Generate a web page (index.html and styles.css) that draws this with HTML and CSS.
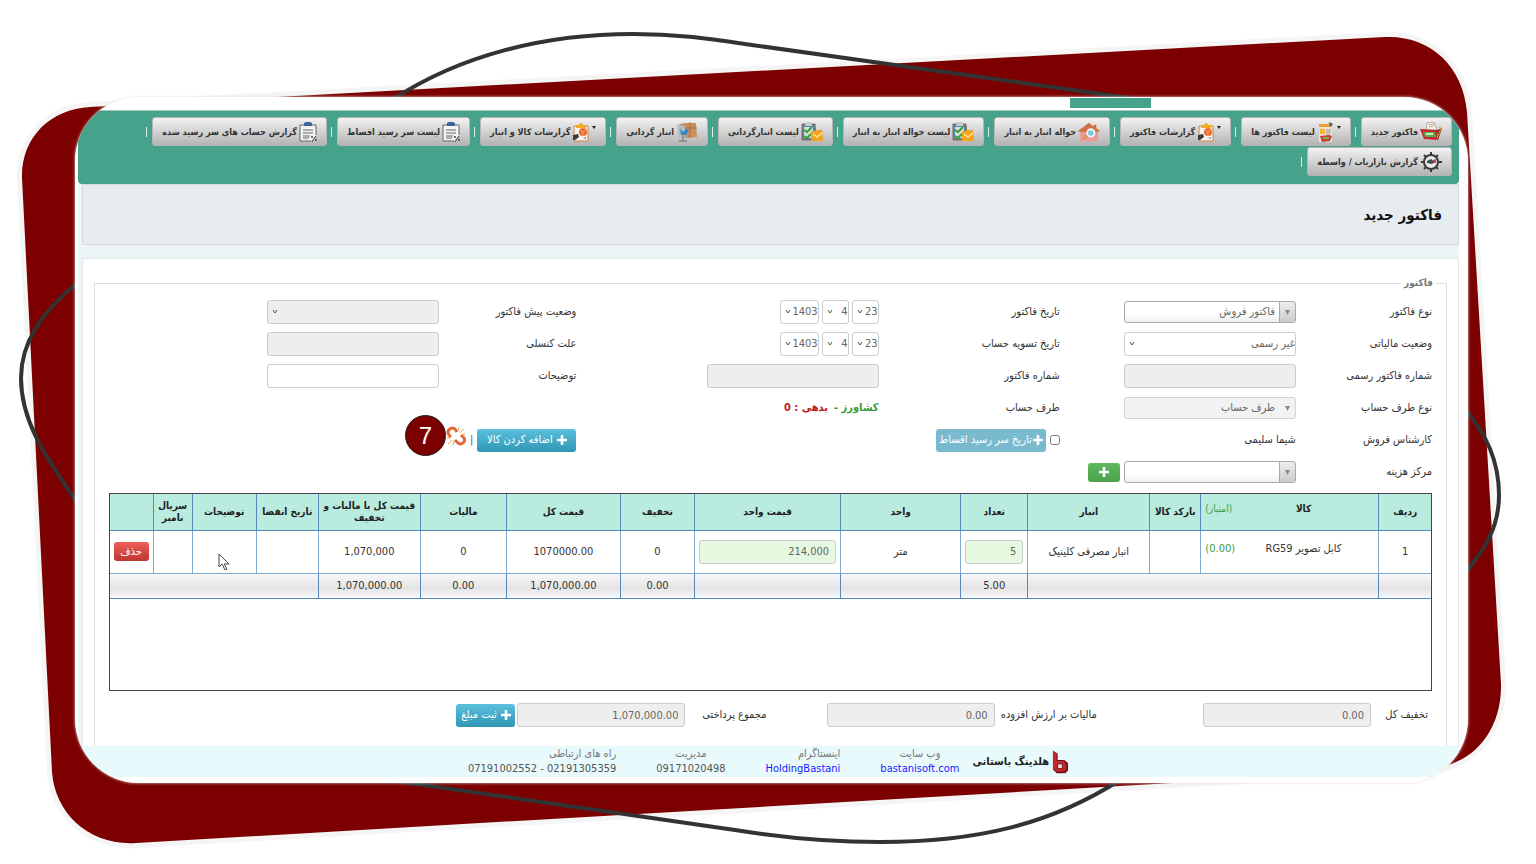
FILE: index.html
```html
<!DOCTYPE html>
<html lang="fa" dir="rtl">
<head>
<meta charset="utf-8">
<meta name="viewport" content="width=device-width, initial-scale=1">
<title>فاکتور جدید</title>
<link rel="stylesheet" href="styles.css">
</head>
<body>
<svg class="backdrop" viewBox="0 0 1536 864" preserveAspectRatio="none" aria-hidden="true">
  <path class="backdrop-shadow" d="M90 107 L1385 37 C1430 35 1463 66 1467 112 L1501 684 C1502 732 1472 765 1432 768 L136 843 C90 846 55 814 52 772 L22 178 C21 138 50 109 90 107Z"/>
  <path class="backdrop-red" d="M90 107 L1385 37 C1430 35 1463 66 1467 112 L1501 684 C1502 732 1472 765 1432 768 L136 843 C90 846 55 814 52 772 L22 178 C21 138 50 109 90 107Z"/>
  <g class="backdrop-line">
    <path d="M392 100 C460 55 545 34 633 34 C675 34 705 38 745 44 L1130 98"/>
    <path d="M80 281 C45 308 21 340 21 378 C21 425 50 462 80 507"/>
    <path d="M1462 406 C1487 433 1499 462 1499 495 C1499 528 1485 549 1462 577"/>
    <path d="M395 781 L735 830 C785 838 830 842 880 842 C975 842 1050 825 1120 780"/>
  </g>
</svg>

<svg class="symbols" aria-hidden="true">
  <symbol id="i-basket" viewBox="0 0 22 20">
    <path d="M7 1l7-1 3 8H6z" fill="#f5f3ee" stroke="#b5aaa0"/><path d="M9 3l5-1M9 5l5-1" stroke="#c9a58a"/>
    <path d="M0 7l17 1 1 10-14-1z" fill="#c8252c"/><path d="M17 8l5-2-4 12z" fill="#7c2a25"/>
    <path d="M3 10h12l1 5H5z" fill="#4fae4e"/><path d="M6 12h7" stroke="#d5efb5" stroke-width="2"/>
    <path d="M19 5l2 1-4 10" stroke="#e0a13c" fill="none"/>
  </symbol>
  <symbol id="i-list" viewBox="0 0 16 20">
    <path d="M1 2h13v18H1z" fill="#e6e1d9"/><path d="M1 2h13v3H1z" fill="#f0a02c"/><path d="M11 0l4 2-3 3" fill="#555"/>
    <path d="M2 7h5v5H2z" fill="#f5b53a"/><path d="M8 8h5M8 10h5M8 12h4" stroke="#999"/>
    <path d="M2 14l9-1 3 1-2 5-8 1z" fill="#c8402c"/><path d="M5 16h6" stroke="#69b75c" stroke-width="2"/>
  </symbol>
  <symbol id="i-report" viewBox="0 0 18 20">
    <path d="M2 4h14v15H2z" fill="#f7f1ea" stroke="#d08545" stroke-width="1"/><path d="M4 3h3a2 2 0 0 1 4 0h3v3H4z" fill="#f2ab27"/>
    <circle cx="11" cy="10" r="4" fill="#ee6a35"/><path d="M11 10L8 8M11 10l3-2M11 10v4" stroke="#f6a73c" stroke-width="1"/>
    <path d="M1 13l5-1 1 3-4 3H1z" fill="#3b3b3b"/><path d="M11 16l3-1v2z" fill="#5b8fd0"/>
  </symbol>
  <symbol id="i-house" viewBox="0 0 24 20">
    <path d="M2 9h20v11H2z" fill="#eb9a9a"/><path d="M12 0L0 9l2 1h20l2-1-4-3V2h-3v2z" fill="#cd7448"/>
    <circle cx="14" cy="11" r="4" fill="#7cc6dc" stroke="#f2f5f7" stroke-width="2"/><path d="M10 14l-5 4" stroke="#d99438" stroke-width="2"/>
  </symbol>
  <symbol id="i-check" viewBox="0 0 22 20">
    <path d="M1 2h13l1 16H1z" fill="#4f86b5" stroke="#94653c"/><path d="M5 0h6v4H4z" fill="#c9ccce"/>
    <path d="M3 5h9v11H3z" fill="#cfe2da"/><path d="M3 8l3 2 5-5M3 14l3 2 4-4" stroke="#3f9a2e" stroke-width="2" fill="none"/>
    <path d="M10 9h4l1-1h6l1 11H10z" fill="#f3a41f"/><path d="M12 11l4 3 5-4v2l-5 4-4-3z" fill="#ffe08a"/>
  </symbol>
  <symbol id="i-box" viewBox="0 0 20 20">
    <path d="M8 1l11 0 1 14-9 1-8-1V2z" fill="#c98f5e"/><path d="M8 6h12M13 0v16" stroke="#a66f42"/>
    <path d="M0 2l8 2v12H2z" fill="#b4bcc3"/><path d="M3 7l3 3 3-3 3 1-3 5-5 0z" fill="#2e86cf"/>
    <path d="M6 12v6M2 19h8" stroke="#8b9196" stroke-width="2"/>
  </symbol>
  <symbol id="i-clip" viewBox="0 0 18 20">
    <path d="M12 19H1V3h16v10" fill="#f3f3f3" stroke="#666"/>
    <path d="M5 1l2-1h4l2 1v3H5z" fill="#3b659c"/><path d="M4 8h10M4 11h10M4 14h7M4 16h6" stroke="#666"/>
    <path d="M17 14l-4 6" stroke="#444"/><circle cx="13" cy="15" r="1" fill="#444"/><circle cx="17" cy="18" r="1" fill="#444"/>
  </symbol>
  <symbol id="i-gear" viewBox="0 0 22 20">
    <circle cx="11" cy="10" r="7" fill="#e8e8e8" stroke="#3a3a3a" stroke-width="2"/>
    <path d="M11 0v3M11 17v3M1 10h3M18 10h4M4 3l2 2M16 15l2 2M18 3l-2 2M6 15l-2 2" stroke="#3a3a3a" stroke-width="2"/>
    <path d="M7 9l4-2 4 3-3 2-5-1z" fill="#4a4a4a"/><path d="M13 8l3-1v4h-2z" fill="#c44"/>
  </symbol>
  <symbol id="i-plus" viewBox="0 0 10 10"><path d="M5 1v8M1 5h8" stroke="#fff" stroke-width="2.6" stroke-linecap="round"/></symbol>
</svg>

<main class="card">
  <div class="tabstrip"><span class="tab"></span></div>
  <nav class="toolbar">
    <span class="item"><button class="tool"><svg class="icon"><use href="#i-basket"/></svg>فاکتور جدید</button></span>
    <span class="item"><button class="tool menu"><i class="caret"></i><svg class="icon narrow"><use href="#i-list"/></svg>لیست فاکتور ها</button></span>
    <span class="item"><button class="tool menu"><i class="caret"></i><svg class="icon narrow"><use href="#i-report"/></svg>گزارشات فاکتور</button></span>
    <span class="item"><button class="tool"><svg class="icon"><use href="#i-house"/></svg>حواله انبار به انبار</button></span>
    <span class="item"><button class="tool"><svg class="icon"><use href="#i-check"/></svg>لیست حواله انبار به انبار</button></span>
    <span class="item"><button class="tool"><svg class="icon"><use href="#i-check"/></svg>لیست انبارگردانی</button></span>
    <span class="item"><button class="tool"><svg class="icon"><use href="#i-box"/></svg>انبار گردانی</button></span>
    <span class="item"><button class="tool menu"><i class="caret"></i><svg class="icon narrow"><use href="#i-report"/></svg>گزارشات کالا و انبار</button></span>
    <span class="item"><button class="tool"><svg class="icon narrow"><use href="#i-clip"/></svg>لیست سر رسید اقساط</button></span>
    <span class="item"><button class="tool"><svg class="icon narrow"><use href="#i-clip"/></svg>گزارش حساب های سر رسید شده</button></span>
    <span class="item"><button class="tool"><svg class="icon"><use href="#i-gear"/></svg>گزارش بازاریاب / واسطه</button></span>
  </nav>

  <div class="content">
    <header class="page-head"><h1>فاکتور جدید</h1></header>
    <section class="panel">
      <fieldset class="invoice">
        <legend>فاکتور</legend>
        <div class="form">
          <label for="type">نوع فاکتور</label>
          <div><select id="type" class="control chosen"><option>فاکتور فروش</option></select></div>
          <label for="d1">تاریخ فاکتور</label>
          <div class="dates">
            <select id="d1" class="control arrow day"><option>23</option></select>
            <select class="control arrow day" aria-label="ماه"><option>4</option></select>
            <select class="control arrow year" aria-label="سال"><option>1403</option></select>
          </div>
          <label for="pre">وضعیت پیش فاکتور</label>
          <div><select id="pre" class="control arrow" disabled><option></option></select></div>

          <label for="tax">وضعیت مالیاتی</label>
          <div><select id="tax" class="control arrow"><option>غیر رسمی</option></select></div>
          <label for="d2">تاریخ تسویه حساب</label>
          <div class="dates">
            <select id="d2" class="control arrow day"><option>23</option></select>
            <select class="control arrow day" aria-label="ماه"><option>4</option></select>
            <select class="control arrow year" aria-label="سال"><option>1403</option></select>
          </div>
          <label for="cancel">علت کنسلی</label>
          <div><input id="cancel" class="control" disabled></div>

          <label for="official">شماره فاکتور رسمی</label>
          <div><input id="official" class="control" disabled></div>
          <label for="number">شماره فاکتور</label>
          <div><input id="number" class="control" disabled></div>
          <label for="notes">توضیحات</label>
          <div><input id="notes" class="control"></div>

          <label for="ptype">نوع طرف حساب</label>
          <div><select id="ptype" class="control chosen" disabled><option>طرف حساب</option></select></div>
          <span>طرف حساب</span>
          <div class="party"><span class="name">کشاورز -</span><span class="debt">بدهی : 0</span></div>
          <div class="rest"></div>

          <span>کارشناس فروش</span>
          <span>شیما سلیمی</span>
          <div class="actions installment">
            <input type="checkbox" id="inst" aria-label="تاریخ سر رسید اقساط">
            <button class="btn info" disabled><svg class="plus"><use href="#i-plus"/></svg>تاریخ سر رسید اقساط</button>
          </div>
          <div class="actions rest">
            <button class="btn info add"><svg class="plus"><use href="#i-plus"/></svg>اضافه کردن کالا</button>
            <span class="bar">|</span>
            <svg class="unlink" viewBox="0 0 20 20" role="img" aria-label="قطع پیوند"><g fill="none"><path d="M5 11L3 9C0 5 5 0 9 3l2 3M9 14l3 3c4 3 8-2 6-5l-3-3" stroke="#e2683c" stroke-width="3"/><path d="M12 5l1-4M14 7l4-4M15 9l4-1M8 15l-1 4M6 14l-4 4M5 12H1" stroke="#eea04d" stroke-width="1"/></g></svg>
            <span class="step">7</span>
          </div>

          <label for="cost">مرکز هزینه</label>
          <div class="actions">
            <select id="cost" class="control chosen"><option></option></select>
            <button class="btn success" aria-label="افزودن"><svg class="plus"><use href="#i-plus"/></svg></button>
          </div>
        </div>

        <div class="grid-box">
          <table>
            <colgroup><col class="w52"><col class="w178"><col class="w51"><col class="w122"><col class="w67"><col class="w120"><col class="w146"><col class="w74"><col class="w114"><col class="w86"><col class="w102"><col class="w62"><col class="w64"><col class="w39"><col class="w43"></colgroup>
            <thead><tr><th>ردیف</th><th><div class="goods"><span>کالا</span><span class="score">(امتیاز)</span></div></th><th>بارکد کالا</th><th>انبار</th><th>تعداد</th><th>واحد</th><th>قیمت واحد</th><th>تخفیف</th><th>قیمت کل</th><th>مالیات</th><th>قیمت کل با مالیات و تخفیف</th><th>تاریخ انقضا</th><th>توضیحات</th><th>سریال نامبر</th><th></th></tr></thead>
            <tbody><tr><td>1</td><td><div class="goods"><span>کابل تصویر RG59</span><span class="score" dir="ltr">(0.00)</span></div></td><td></td><td>انبار مصرفی کلینیک</td><td class="edit"><input class="control" value="5" aria-label="تعداد"></td><td>متر</td><td class="edit"><input class="control" value="214,000" aria-label="قیمت واحد"></td><td>0</td><td>1070000.00</td><td>0</td><td>1,070,000</td><td></td>
              <td><svg class="cursor" viewBox="0 0 12 18" aria-hidden="true"><path d="M1 1v13l3-3 3 6 2-1-3-5h5z" fill="#fff" stroke="#444"/></svg></td><td></td><td class="edit"><button class="btn danger">حذف</button></td></tr></tbody>
            <tfoot><tr><td></td><td colspan="3"></td><td>5.00</td><td></td><td></td><td>0.00</td><td>1,070,000.00</td><td>0.00</td><td>1,070,000.00</td><td colspan="4"></td></tr></tfoot>
          </table>
        </div>

        <div class="totals">
          <label for="t1">تخفیف کل</label><div><input id="t1" class="control" value="0.00" readonly></div>
          <label for="t2">مالیات بر ارزش افزوده</label><div><input id="t2" class="control" value="0.00" readonly></div>
          <label for="t3">مجموع پرداختی</label>
          <div class="actions"><input id="t3" class="control" value="1,070,000.00" readonly><button class="btn info pay"><svg class="plus"><use href="#i-plus"/></svg>ثبت مبلغ</button></div>
        </div>
      </fieldset>
    </section>
  </div>

  <footer class="footer">
    <div class="brand">
      <svg viewBox="0 0 18 24" aria-hidden="true"><path d="M1 0l5 3v7h7l4 3v8l-3 3H5l-4-4z" fill="#721419"/><path d="M1 0l4 3v8h7l3 3v6l-3 2H5l-4-3z" fill="#c3282d"/><path d="M6 14h5v5H6z" fill="#f4dada" stroke="#721419"/></svg>
      <strong>هلدینگ باستانی</strong>
    </div>
    <div class="contact mid"><span>وب سایت</span><a href="#">bastanisoft.com</a></div>
    <div class="contact"><span>اینستاگرام</span><a href="#">HoldingBastani</a></div>
    <div class="contact mid"><span>مدیریت</span><b>09171020498</b></div>
    <div class="contact"><span>راه های ارتباطی</span><b dir="ltr">07191002552 - 02191305359</b></div>
  </footer>
</main>
</body>
</html>
```
FILE: styles.css
```css
* { box-sizing: border-box; }

body {
  margin: 0;
  min-height: 100vh;
  padding: 97px 68px 80px 75px;
  position: relative;
  background: #fff;
  color: #333;
  font: 11px/16px "DejaVu Sans Condensed", "DejaVu Sans", sans-serif;
}

button, input, select { font: inherit; color: inherit; margin: 0; }

.backdrop { position: absolute; inset: 0; width: 100%; height: 100%; }
.backdrop-shadow { fill: none; stroke: #f5f5f5; stroke-width: 10; }
.backdrop-red { fill: #7d0000; }
.backdrop-line { fill: none; stroke: #333; stroke-width: 4; }
.symbols { position: absolute; width: 0; height: 0; }

.card {
  position: relative;
  display: flex;
  flex-direction: column;
  padding: 0 9px 6px 3px;
  background: #fff;
  border-radius: 64px;
  overflow: hidden;
  box-shadow: 0 0 3px #ddd;
}

.tabstrip { height: 13px; padding: 1px 308px 0 0; }
.tab { display: block; width: 81px; height: 10px; background: #46a28b; }

.toolbar {
  display: flex;
  flex-wrap: wrap;
  align-content: flex-start;
  row-gap: 1px;
  min-height: 74px;
  padding: 6px 7px 6px 0;
  background: #46a28b;
  border-top: 1px solid #9fc9bd;
  border-radius: 0 0 4px 4px;
}
.item { display: flex; align-items: center; }
.item::after { content: ""; width: 1px; height: 10px; margin: 0 5px 0 4px; background: #d9f0e9; }
.tool {
  display: flex;
  align-items: center;
  gap: 2px;
  height: 29px;
  padding: 0 9px;
  border: 1px solid #b5b5b5;
  border-radius: 3px;
  background: linear-gradient(#f2f2f2, #b4b4b4);
  font-weight: bold;
  font-size: 9px;
  white-space: nowrap;
}
.icon { width: 22px; height: 20px; }
.icon.narrow { width: 18px; }
.caret { border: 2px solid transparent; border-top: 3px solid #222; border-bottom: 0; margin-bottom: 8px; }

.content { padding-left: 4px; background: #ecf4f7; }
.page-head {
  display: flex;
  align-items: center;
  height: 61px;
  padding: 0 16px;
  background: #e7ecf0;
  border: 1px solid #d5dade;
}
h1 { margin: 0; font-size: 15px; line-height: 20px; color: #111; }
.panel {
  margin-top: 13px;
  padding: 16px 11px 0;
  background: #fff;
  border: 1px solid #e4e8ea;
  border-bottom: 0;
  border-radius: 3px 3px 0 0;
}
.invoice {
  margin: 0;
  min-width: 0;
  padding: 5px 14px 19px;
  border: 1px solid #ddd;
  border-bottom: 0;
}
legend { padding: 0 3px; margin-right: -4px; font-weight: bold; color: #777; font-size: 10px; }

.form {
  display: grid;
  grid-template-columns: 136fr 236fr 181fr 302fr 137fr 330fr;
  grid-auto-rows: 32px;
  align-items: center;
}
.rest { grid-column: span 2; }
.control {
  display: block;
  width: 172px;
  height: 24px;
  padding: 0 6px;
  background-color: #fff;
  border: 1px solid #ccc;
  border-radius: 3px;
  color: #666;
  appearance: none;
}
.control:disabled, .control:read-only:not(select) { background-color: #eee; opacity: 1; }
.arrow {
  padding: 0;
  background: #fff url("data:image/svg+xml,%3Csvg xmlns='http://www.w3.org/2000/svg' width='6' height='6'%3E%3Cpath d='M1 1l2 3 2-3' fill='none' stroke='%23555'/%3E%3C/svg%3E") no-repeat 4px center;
}
.chosen {
  padding: 0 20px 0 6px;
  height: 22px;
  border-color: #aaa;
  background:
    url("data:image/svg+xml,%3Csvg xmlns='http://www.w3.org/2000/svg' width='5' height='5'%3E%3Cpath d='M0 0h5L2.500 5z' fill='%23888'/%3E%3C/svg%3E") no-repeat right 5px center,
    linear-gradient(#aaa, #aaa) no-repeat right 15px top / 1px 100%,
    linear-gradient(#eee, #ccc) no-repeat right / 15px 100%,
    linear-gradient(#fff 60%, #eee);
}
.chosen:disabled {
  border-color: #d5d5d5;
  background: #f2f2f2 url("data:image/svg+xml,%3Csvg xmlns='http://www.w3.org/2000/svg' width='5' height='5'%3E%3Cpath d='M0 0h5L2.500 5z' fill='%23888'/%3E%3C/svg%3E") no-repeat right 5px center;
}
.dates { display: flex; gap: 3px; }
.day { width: 27px; }
.year { width: 39px; }
.party { display: flex; gap: 6px; font-weight: bold; }
.name { color: #3b9b3b; }
.debt { color: #c01818; }

.actions { display: flex; align-items: center; gap: 4px; }
.installment { grid-column: span 2; }
.installment input { width: 10px; height: 10px; }
.btn {
  display: flex;
  align-items: center;
  justify-content: center;
  gap: 4px;
  height: 23px;
  padding: 0 8px;
  border: 0;
  border-radius: 3px;
  color: #fff;
  white-space: nowrap;
}
.info { background: linear-gradient(#5bc0de, #2f96b4); }
.info:disabled { background: #7abacf; padding: 0 3px; gap: 1px; }
.add { width: 99px; }
.pay { width: 59px; padding: 0; margin-right: -2px; }
.success { width: 32px; height: 19px; background: linear-gradient(#62b862, #4da24d); }
.danger { width: 35px; height: 19px; padding: 0; background: linear-gradient(#ee5f5b, #bd362f); }
.plus { width: 10px; height: 10px; flex: none; }
.bar { color: #555; }
.unlink { width: 20px; height: 20px; margin-bottom: 8px; }
.step {
  display: grid;
  place-items: center;
  width: 41px;
  height: 41px;
  margin: -9px -4px 0 0;
  border: 1px solid #222;
  border-radius: 50%;
  background: #7d0000;
  color: #fff;
  font: 24px/24px "Liberation Sans", Arial, sans-serif;
}

.grid-box { min-height: 198px; margin-top: 5px; border: 1px solid #444; }
table { width: 100%; table-layout: fixed; border-collapse: collapse; }
th, td { padding: 0; border: 1px solid #7fa9cf; text-align: center; color: #333; }
tr > :first-child { border-right: 0; }
tr > :last-child { border-left: 0; }
thead tr { height: 36px; background: #b9ebdf; }
th { line-height: 12px; color: #222; font-size: 10px; border-top: 0; border-color: #5688b8; }
tbody tr { height: 43px; }
tfoot tr { height: 25px; background: linear-gradient(#fafafa, #e4e4e4 60%, #f8f8f8); }
tfoot td { border-color: #5688b8; }
.goods { display: grid; grid-template-columns: 3fr 1fr; align-items: center; padding: 0 16px 5px 4px; }
.score { color: #3b9b3b; font-weight: normal; text-align: left; }
.edit { padding: 0 4px; }
.edit .control { width: 100%; background: #e4f9e0; }
.cursor { width: 12px; height: 18px; display: block; margin: 20px auto 0; }
.w52 { width: 52px; } .w178 { width: 178px; } .w51 { width: 51px; } .w122 { width: 122px; }
.w67 { width: 67px; } .w120 { width: 120px; } .w146 { width: 146px; } .w74 { width: 74px; }
.w114 { width: 114px; } .w86 { width: 86px; } .w102 { width: 102px; } .w62 { width: 62px; }
.w64 { width: 64px; } .w39 { width: 39px; } .w43 { width: 43px; }

.totals {
  display: grid;
  grid-template-columns: 57fr 274fr 102fr 228fr 81fr 576fr;
  align-items: center;
  margin-top: 12px;
  padding-right: 4px;
}
.totals label { white-space: nowrap; }
.totals .control { width: 168px; }

.footer {
  display: flex;
  justify-content: center;
  gap: 40px;
  height: 31px;
  background: #e8fafb;
  line-height: 15px;
}
.brand { display: flex; align-items: center; gap: 3px; margin-left: -27px; color: #222; }
.brand svg { width: 17px; height: 24px; }
.contact { display: flex; flex-direction: column; color: #777; }
.contact.mid { align-items: center; }
.contact b { font-weight: normal; color: #555; }
.contact a { color: #1a1aff; text-decoration: none; }
```
